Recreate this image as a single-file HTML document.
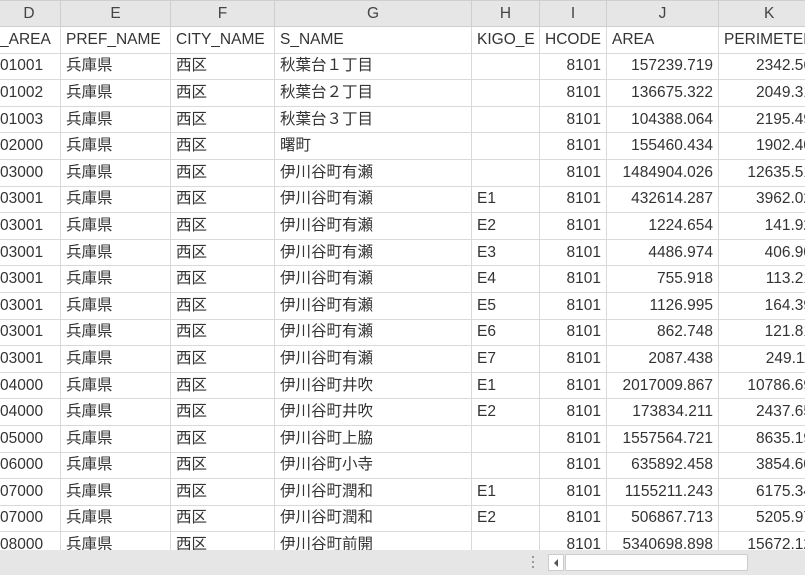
<!DOCTYPE html><html><head><meta charset="utf-8"><style>
body{margin:0;width:805px;height:575px;overflow:hidden;background:#fff;font-family:"Liberation Sans","Noto Sans CJK JP",sans-serif;font-size:15.5px;color:#333;position:relative}
table{border-collapse:collapse;table-layout:fixed;position:absolute;left:-3px;top:0;width:843px}
td{border:1px solid #d9d9d9;height:26.6px;line-height:20px;padding:0 5px;white-space:nowrap;overflow:hidden;box-sizing:border-box;vertical-align:middle}
tr.h td{background:#e6e6e6;text-align:center;color:#444;height:26px;border-color:#cfcfcf}
td.r{text-align:right}
td.c{padding-left:2px}
td.k{text-align:right;padding-right:28px}
#bar{position:absolute;left:0;top:550px;width:805px;height:25px;background:#e6e6e6}
</style></head><body>
<table>
<colgroup><col style="width:63px"><col style="width:110px"><col style="width:104px"><col style="width:197px"><col style="width:68px"><col style="width:67px"><col style="width:112px"><col style="width:122px"></colgroup>
<tr class="h"><td>D</td><td>E</td><td>F</td><td>G</td><td>H</td><td>I</td><td>J</td><td style="text-align:left;padding-left:45px">K</td></tr>
<tr><td class="c">_AREA</td><td>PREF_NAME</td><td>CITY_NAME</td><td>S_NAME</td><td>KIGO_E</td><td>HCODE</td><td>AREA</td><td>PERIMETER</td></tr>
<tr><td class="c">01001</td><td>兵庫県</td><td>西区</td><td>秋葉台１丁目</td><td></td><td class="r">8101</td><td class="r">157239.719</td><td class="k">2342.56</td></tr>
<tr><td class="c">01002</td><td>兵庫県</td><td>西区</td><td>秋葉台２丁目</td><td></td><td class="r">8101</td><td class="r">136675.322</td><td class="k">2049.31</td></tr>
<tr><td class="c">01003</td><td>兵庫県</td><td>西区</td><td>秋葉台３丁目</td><td></td><td class="r">8101</td><td class="r">104388.064</td><td class="k">2195.49</td></tr>
<tr><td class="c">02000</td><td>兵庫県</td><td>西区</td><td>曙町</td><td></td><td class="r">8101</td><td class="r">155460.434</td><td class="k">1902.40</td></tr>
<tr><td class="c">03000</td><td>兵庫県</td><td>西区</td><td>伊川谷町有瀬</td><td></td><td class="r">8101</td><td class="r">1484904.026</td><td class="k">12635.51</td></tr>
<tr><td class="c">03001</td><td>兵庫県</td><td>西区</td><td>伊川谷町有瀬</td><td>E1</td><td class="r">8101</td><td class="r">432614.287</td><td class="k">3962.02</td></tr>
<tr><td class="c">03001</td><td>兵庫県</td><td>西区</td><td>伊川谷町有瀬</td><td>E2</td><td class="r">8101</td><td class="r">1224.654</td><td class="k">141.92</td></tr>
<tr><td class="c">03001</td><td>兵庫県</td><td>西区</td><td>伊川谷町有瀬</td><td>E3</td><td class="r">8101</td><td class="r">4486.974</td><td class="k">406.90</td></tr>
<tr><td class="c">03001</td><td>兵庫県</td><td>西区</td><td>伊川谷町有瀬</td><td>E4</td><td class="r">8101</td><td class="r">755.918</td><td class="k">113.21</td></tr>
<tr><td class="c">03001</td><td>兵庫県</td><td>西区</td><td>伊川谷町有瀬</td><td>E5</td><td class="r">8101</td><td class="r">1126.995</td><td class="k">164.39</td></tr>
<tr><td class="c">03001</td><td>兵庫県</td><td>西区</td><td>伊川谷町有瀬</td><td>E6</td><td class="r">8101</td><td class="r">862.748</td><td class="k">121.81</td></tr>
<tr><td class="c">03001</td><td>兵庫県</td><td>西区</td><td>伊川谷町有瀬</td><td>E7</td><td class="r">8101</td><td class="r">2087.438</td><td class="k">249.11</td></tr>
<tr><td class="c">04000</td><td>兵庫県</td><td>西区</td><td>伊川谷町井吹</td><td>E1</td><td class="r">8101</td><td class="r">2017009.867</td><td class="k">10786.69</td></tr>
<tr><td class="c">04000</td><td>兵庫県</td><td>西区</td><td>伊川谷町井吹</td><td>E2</td><td class="r">8101</td><td class="r">173834.211</td><td class="k">2437.65</td></tr>
<tr><td class="c">05000</td><td>兵庫県</td><td>西区</td><td>伊川谷町上脇</td><td></td><td class="r">8101</td><td class="r">1557564.721</td><td class="k">8635.19</td></tr>
<tr><td class="c">06000</td><td>兵庫県</td><td>西区</td><td>伊川谷町小寺</td><td></td><td class="r">8101</td><td class="r">635892.458</td><td class="k">3854.60</td></tr>
<tr><td class="c">07000</td><td>兵庫県</td><td>西区</td><td>伊川谷町潤和</td><td>E1</td><td class="r">8101</td><td class="r">1155211.243</td><td class="k">6175.34</td></tr>
<tr><td class="c">07000</td><td>兵庫県</td><td>西区</td><td>伊川谷町潤和</td><td>E2</td><td class="r">8101</td><td class="r">506867.713</td><td class="k">5205.97</td></tr>
<tr><td class="c">08000</td><td>兵庫県</td><td>西区</td><td>伊川谷町前開</td><td></td><td class="r">8101</td><td class="r">5340698.898</td><td class="k">15672.12</td></tr>
</table>
<div id="bar">
<div style="position:absolute;left:532px;top:6px;width:2px;height:2px;background:#999;box-shadow:0 5px 0 #999,0 10px 0 #999"></div>
<div style="position:absolute;left:548px;top:4px;width:16px;height:17px;background:#fff;border:1px solid #ccc;box-sizing:border-box"><div style="position:absolute;left:5px;top:4px;border-right:4px solid #555;border-top:4px solid transparent;border-bottom:4px solid transparent"></div></div>
<div style="position:absolute;left:565px;top:4px;width:183px;height:17px;background:#fff;border:1px solid #ccc;box-sizing:border-box;border-radius:2px"></div>
</div>
</body></html>
